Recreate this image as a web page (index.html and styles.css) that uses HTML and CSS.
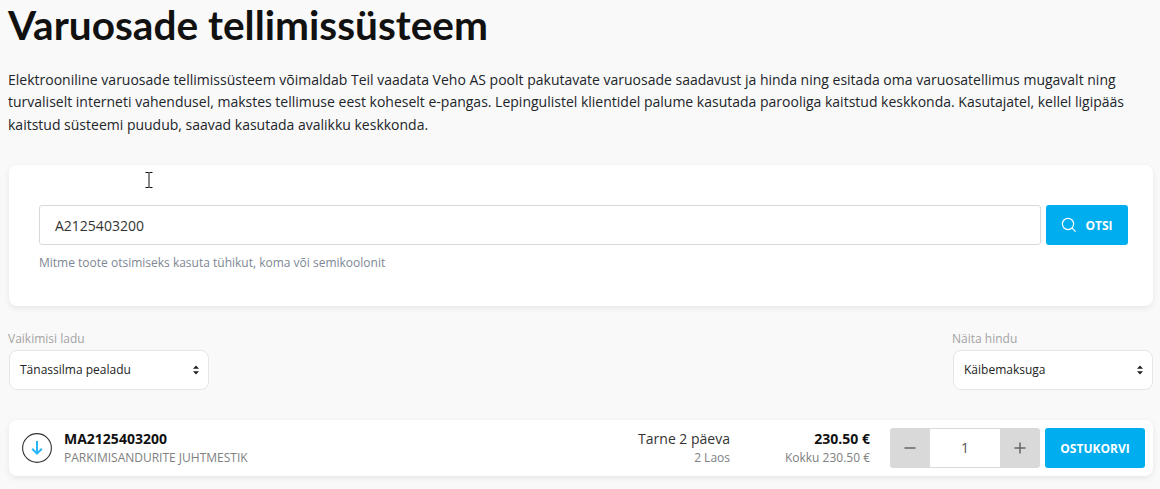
FILE: index.html
```html
<!DOCTYPE html>
<html lang="et">
<head>
<meta charset="utf-8">
<title>Varuosade tellimissüsteem</title>
<link rel="stylesheet" href="styles.css">
</head>
<body>
<main class="page">
  <h1 class="title">Varuosade tellimissüsteem</h1>
  <p class="intro">Elektrooniline varuosade tellimissüsteem võimaldab Teil vaadata Veho AS poolt pakutavate varuosade saadavust ja hinda ning esitada oma varuosatellimus mugavalt ning turvaliselt interneti vahendusel, makstes tellimuse eest koheselt e-pangas. Lepingulistel klientidel palume kasutada parooliga kaitstud keskkonda. Kasutajatel, kellel ligipääs kaitstud süsteemi puudub, saavad kasutada avalikku keskkonda.</p>

  <section class="search-card">
    <svg class="cursor" width="8" height="16" viewBox="0 0 8 16" aria-hidden="true"><path d="M0.5 0.5H3.5L4 1L4.5 0.5H7.5M4 1V15M0.5 15.5H3.5L4 15L4.5 15.5H7.5" fill="none" stroke="#111" stroke-width="1"/></svg>
    <div class="search-row">
      <input class="search-input" type="text" value="A2125403200">
      <button class="search-btn" type="button">
        <svg width="16" height="16" viewBox="0 0 16 16" aria-hidden="true"><circle cx="7" cy="7" r="5.6" fill="none" stroke="#fff" stroke-width="1.2"/><path d="M11.2 11.2L14.6 14.6" stroke="#fff" stroke-width="1.2" fill="none"/></svg>
        <span>OTSI</span>
      </button>
    </div>
    <p class="hint">Mitme toote otsimiseks kasuta tühikut, koma või semikoolonit</p>
  </section>

  <div class="filters">
    <div class="filter">
      <div class="filter-label">Vaikimisi ladu</div>
      <div class="select"><span>Tänassilma pealadu</span>
        <svg width="8" height="10" viewBox="0 0 8 10" aria-hidden="true"><path d="M4 0.5L7 3.8H1ZM4 9.5L1 6.2H7Z" fill="#222"/></svg>
      </div>
    </div>
    <div class="filter">
      <div class="filter-label">Näita hindu</div>
      <div class="select"><span>Käibemaksuga</span>
        <svg width="8" height="10" viewBox="0 0 8 10" aria-hidden="true"><path d="M4 0.5L7 3.8H1ZM4 9.5L1 6.2H7Z" fill="#222"/></svg>
      </div>
    </div>
  </div>

  <section class="product">
    <span class="expand">
      <svg width="30" height="30" viewBox="0 0 30 30" aria-hidden="true"><circle cx="15" cy="15" r="14.4" fill="none" stroke="#333" stroke-width="1.1"/><path d="M15 8V20.5M10.2 15.8L15 20.6L19.8 15.8" fill="none" stroke="#29b6f6" stroke-width="2"/></svg>
    </span>
    <div class="product-info">
      <div class="sku">MA2125403200</div>
      <div class="product-name">PARKIMISANDURITE JUHTMESTIK</div>
    </div>
    <div class="delivery">
      <div class="delivery-time">Tarne 2 päeva</div>
      <div class="stock">2 Laos</div>
    </div>
    <div class="price">
      <div class="price-main">230.50 €</div>
      <div class="price-total">Kokku 230.50 €</div>
    </div>
    <div class="qty">
      <span class="qty-btn">
        <svg width="12" height="12" viewBox="0 0 12 12" aria-hidden="true"><path d="M0.5 6H11.5" stroke="#666" stroke-width="1.5"/></svg>
      </span>
      <span class="qty-value">1</span>
      <span class="qty-btn">
        <svg width="12" height="12" viewBox="0 0 12 12" aria-hidden="true"><path d="M0.5 6H11.5M6 0.5V11.5" stroke="#666" stroke-width="1.5"/></svg>
      </span>
    </div>
    <button class="cart-btn" type="button">OSTUKORVI</button>
  </section>
</main>
</body>
</html>
```
FILE: styles.css
```css
* { box-sizing: border-box; }
html, body { margin: 0; padding: 0; height: 489px; overflow: hidden; }
body { background: #f9f9f9; color: #212529; font-family: "Open Sans", sans-serif; font-size: 14px; line-height: 22.4px; }
.page { width: 1145px; margin-left: 8px; }
.title { margin: 0; padding-top: 1px; font-family: Lato, sans-serif; font-weight: 700; font-size: 40.6px; line-height: 48px; color: #111; }
.intro { margin: 20px 0 0; width: 1130px; color: #212529; }
.search-card { position: relative; margin: 28.8px 0 0 1px; height: 141px; background: #fff; border-radius: 8px; box-shadow: 0 2px 6px rgba(0,0,0,.08); padding: 40px 25px 0 30px; }
.cursor { position: absolute; left: 136px; top: 7px; }
.search-row { display: flex; gap: 5px; height: 40px; }
.search-input { flex: 1; min-width: 0; height: 40px; border: 1px solid #d9d9d9; border-radius: 3px; padding: 0 15px; font: 14px "Open Sans", sans-serif; color: #333; background: #fff; outline: none; }
.search-btn { width: 82px; height: 40px; border: 0; border-radius: 3px; background: #00aeef; color: #fff; display: flex; align-items: center; justify-content: center; gap: 8px; padding: 0; font: 700 12px "Open Sans", sans-serif; }
.hint { margin: 6px 0 0; font-size: 12px; line-height: 24px; color: #7d8793; }
.filters { display: flex; justify-content: space-between; margin: 21px 0 0; }
.filter { width: 201px; padding-left: 1px; }
.filter-label { font-size: 12px; line-height: 23px; color: #a3a3a3; margin-left: -1px; }
.select { height: 40px; width: 200px; border: 1px solid #e6e6e6; border-radius: 8px; background: #fff; display: flex; align-items: center; justify-content: space-between; padding: 0 8px 0 10px; font-size: 12px; color: #222; }
.product { display: flex; align-items: center; margin: 30px 0 0 1px; height: 56px; background: #fff; border-radius: 8px; box-shadow: 0 2px 6px rgba(0,0,0,.08); padding: 0 8px 0 13px; }
.expand { display: flex; width: 30px; height: 30px; flex: none; }
.product-info { margin-left: 12px; flex: 1; }
.sku { font-weight: 700; font-size: 14px; line-height: 20px; color: #111; }
.product-name { font-size: 12px; line-height: 18px; color: #808080; }
.delivery { text-align: right; width: 130px; }
.delivery-time { font-size: 14px; line-height: 20px; color: #333; }
.stock { font-size: 12px; line-height: 18px; color: #808080; }
.price { text-align: right; width: 140px; }
.price-main { font-weight: 700; font-size: 14px; line-height: 20px; color: #111; }
.price-total { font-size: 12px; line-height: 18px; color: #808080; }
.qty { display: flex; width: 150px; height: 40px; margin-left: 20px; border-radius: 3px; overflow: hidden; }
.qty-btn { width: 40px; background: #d9d9d9; display: flex; align-items: center; justify-content: center; }
.qty-value { flex: 1; border-top: 1px solid #d9d9d9; border-bottom: 1px solid #d9d9d9; background: #fff; display: flex; align-items: center; justify-content: center; font-size: 14px; color: #555; }
.cart-btn { width: 100px; height: 40px; margin-left: 5px; border: 0; border-radius: 3px; background: #00aeef; color: #fff; font: 700 12px "Open Sans", sans-serif; padding: 0; }
```
